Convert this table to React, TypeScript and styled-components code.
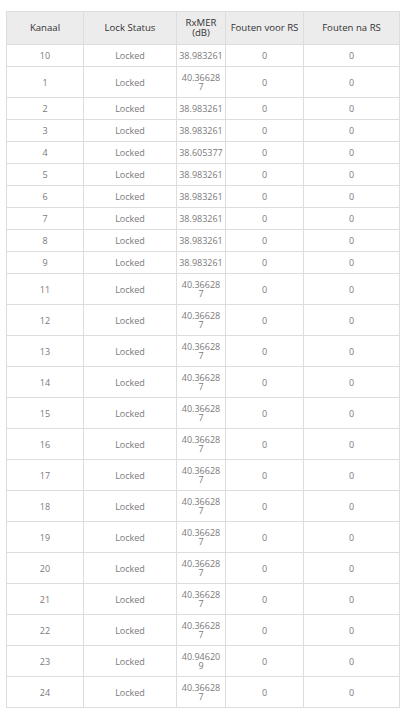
import styled, { createGlobalStyle } from "styled-components"

const GlobalStyle = createGlobalStyle`
  body {
    margin: 0;
    background: #ffffff;
    font-family: "Open Sans", "Noto Sans", sans-serif;
  }
`

type rowType = {
  kanaal: number
  rxmer: string
}

const rows: rowType[] = [
  { kanaal: 10, rxmer: "38.983261" },
  { kanaal: 1, rxmer: "40.366287" },
  { kanaal: 2, rxmer: "38.983261" },
  { kanaal: 3, rxmer: "38.983261" },
  { kanaal: 4, rxmer: "38.605377" },
  { kanaal: 5, rxmer: "38.983261" },
  { kanaal: 6, rxmer: "38.983261" },
  { kanaal: 7, rxmer: "38.983261" },
  { kanaal: 8, rxmer: "38.983261" },
  { kanaal: 9, rxmer: "38.983261" },
  { kanaal: 11, rxmer: "40.366287" },
  { kanaal: 12, rxmer: "40.366287" },
  { kanaal: 13, rxmer: "40.366287" },
  { kanaal: 14, rxmer: "40.366287" },
  { kanaal: 15, rxmer: "40.366287" },
  { kanaal: 16, rxmer: "40.366287" },
  { kanaal: 17, rxmer: "40.366287" },
  { kanaal: 18, rxmer: "40.366287" },
  { kanaal: 19, rxmer: "40.366287" },
  { kanaal: 20, rxmer: "40.366287" },
  { kanaal: 21, rxmer: "40.366287" },
  { kanaal: 22, rxmer: "40.366287" },
  { kanaal: 23, rxmer: "40.946209" },
  { kanaal: 24, rxmer: "40.366287" },
]

const Mer = ({ value }: { value: string }) =>
  value.startsWith("40") ? <>{value.slice(0, 8)}<br />{value.slice(8)}</> : <>{value}</>

const App = () => {
  return (
    <Page>
      <GlobalStyle />
      <StatusTable>
        <colgroup>
          <col style={{ width: 77 }} />
          <col style={{ width: 93 }} />
          <col style={{ width: 49 }} />
          <col style={{ width: 78 }} />
          <col style={{ width: 96 }} />
        </colgroup>
        <thead>
          <tr>
            <HeadCell>Kanaal</HeadCell>
            <HeadCell>Lock Status</HeadCell>
            <HeadCell>RxMER<br />(dB)</HeadCell>
            <HeadCell>Fouten voor RS</HeadCell>
            <HeadCell>Fouten na RS</HeadCell>
          </tr>
        </thead>
        <tbody>
          {rows.map(row => (
            <tr key={row.kanaal}>
              <Cell>{row.kanaal}</Cell>
              <Cell>Locked</Cell>
              <Cell $tight><Mer value={row.rxmer} /></Cell>
              <Cell>0</Cell>
              <Cell>0</Cell>
            </tr>
          ))}
        </tbody>
      </StatusTable>
    </Page>
  )
}

export default App


const Page = styled.div`
  padding: 11px 0 9px 6px;
`

const StatusTable = styled.table`
  width: 393px;
  table-layout: fixed;
  border-collapse: collapse;
  border: 1px solid #dddddd;
`

const HeadCell = styled.th`
  background: #ececec;
  border: 1px solid #dddddd;
  color: #333333;
  font-size: 9.6px;
  font-weight: 400;
  line-height: 10px;
  padding: 6px 2px;
  text-align: center;
  vertical-align: middle;
`

const Cell = styled.td<{ $tight?: boolean }>`
  border: 1px solid #dddddd;
  color: #7a7a7a;
  font-size: 9px;
  line-height: 9px;
  padding: ${p => (p.$tight ? "6px 1px" : "6px 2px")};
  text-align: center;
  vertical-align: middle;
  white-space: nowrap;
`
